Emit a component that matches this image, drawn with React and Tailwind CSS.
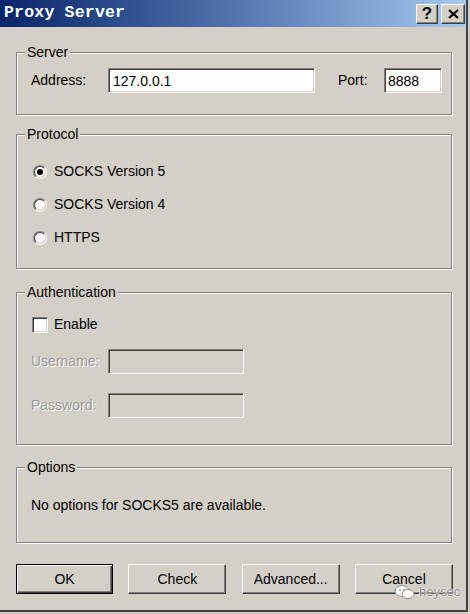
import { useState } from "react";

// classic win32 bevels
const sunken =
  "border border-t-[#808080] border-l-[#808080] border-r-white border-b-white shadow-[inset_1px_1px_0_#404040,inset_-1px_-1px_0_#d4d0c8]";
const raised =
  "border border-t-white border-l-white border-r-[#404040] border-b-[#404040] shadow-[inset_-1px_-1px_0_#808080]";
const etched =
  "relative border border-[#808080] shadow-[1px_1px_0_#fff,inset_1px_1px_0_#fff]";

const GroupBox = ({ title, className, children }) => (
  <div className={`${etched} ${className}`}>
    <span className="absolute -top-[9px] left-[8px] bg-[#d4d0c8] px-[2px] leading-[16px]">
      {title}
    </span>
    {children}
  </div>
);

const Radio = ({ checked, label, onClick }) => (
  <div className="flex items-center h-[33px] cursor-default" onClick={onClick}>
    <div className="ml-[16px] w-[14px] h-[14px] rounded-full border border-t-[#808080] border-l-[#808080] border-r-white border-b-white">
      <div className="w-full h-full rounded-full border border-t-[#404040] border-l-[#404040] border-r-[#d4d0c8] border-b-[#d4d0c8] bg-white flex items-center justify-center">
        {checked && <div className="w-[6px] h-[6px] rounded-full bg-black" />}
      </div>
    </div>
    <span className="ml-[7px]">{label}</span>
  </div>
);

const Button = ({ children, primary }) => (
  <button
    className={
      primary
        ? "w-[97px] h-[30px] border border-black bg-[#d4d0c8] shadow-[inset_1px_1px_0_#fff,inset_-1px_-1px_0_#404040,inset_-2px_-2px_0_#808080]"
        : `w-[98px] h-[30px] bg-[#d4d0c8] ${raised}`
    }
  >
    {children}
  </button>
);

const App = () => {
  const [protocol, setProtocol] = useState("socks5");
  const [auth, setAuth] = useState(false);

  return (
    <div className="w-[470px] h-[614px] bg-[#d4d0c8] text-[14px] text-black font-['Liberation_Sans',Arial,sans-serif] relative overflow-hidden">
      <div className="w-[468px] h-[612px] border-r-2 border-b-2 border-r-[#404040] border-b-[#404040]">
        {/* Title bar */}
        <div className="h-[27px] flex items-center bg-gradient-to-r from-[#0a246a] to-[#a6caf0]">
          <span className="pl-[4px] text-white font-bold text-[16.5px] font-['Liberation_Mono','Courier_New',monospace] tracking-[0.2px]">
            Proxy Server
          </span>
          <div className="ml-auto flex gap-[3px] pr-[1px]">
            <div className={`w-[22px] h-[20px] bg-[#d4d0c8] ${raised} flex items-center justify-center font-bold text-[17px] leading-none`}>
              ?
            </div>
            <div className={`w-[24px] h-[20px] bg-[#d4d0c8] ${raised} flex items-center justify-center`}>
              <svg width="11" height="10" viewBox="0 0 11 10">
                <path d="M1 1 L10 9 M10 1 L1 9" stroke="#000" strokeWidth="2.2" />
              </svg>
            </div>
          </div>
        </div>

        <div className="pl-[16px] flex flex-col w-[452px]">
          {/* Server */}
          <GroupBox title="Server" className="mt-[25px] h-[63px]">
            <div className="flex items-center mt-[15px] pl-[14px]">
              <span className="w-[77px]">Address:</span>
              <input
                defaultValue="127.0.0.1"
                className={`w-[207px] h-[25px] bg-white px-[4px] outline-none ${sunken}`}
              />
              <span className="ml-[23px] w-[46px]">Port:</span>
              <input
                defaultValue="8888"
                className={`w-[58px] h-[25px] bg-white px-[3px] outline-none ${sunken}`}
              />
            </div>
          </GroupBox>

          {/* Protocol */}
          <GroupBox title="Protocol" className="mt-[19px] h-[135px]">
            <div className="pt-[20px]">
              <Radio label="SOCKS Version 5" checked={protocol === "socks5"} onClick={() => setProtocol("socks5")} />
              <Radio label="SOCKS Version 4" checked={protocol === "socks4"} onClick={() => setProtocol("socks4")} />
              <Radio label="HTTPS" checked={protocol === "https"} onClick={() => setProtocol("https")} />
            </div>
          </GroupBox>

          {/* Authentication */}
          <GroupBox title="Authentication" className="mt-[23px] h-[153px]">
            <div className="flex items-center mt-[21px] pl-[15px]" onClick={() => setAuth(!auth)}>
              <div className={`w-[16px] h-[16px] bg-white ${sunken} flex items-center justify-center`}>
                {auth && (
                  <svg width="9" height="8" viewBox="0 0 9 8">
                    <path d="M1 4 L3.5 6.5 L8 1" stroke="#000" strokeWidth="2" fill="none" />
                  </svg>
                )}
              </div>
              <span className="ml-[6px]">Enable</span>
            </div>
            <div className="flex items-center mt-[14px] pl-[14px]">
              <span className={`w-[77px] ${auth ? "" : "text-[#9a9a9a] [text-shadow:1px_1px_0_#fff]"}`}>Username:</span>
              <input
                disabled={!auth}
                className={`w-[136px] h-[25px] px-[3px] outline-none ${auth ? "bg-white" : "bg-[#d4d0c8]"} ${sunken}`}
              />
            </div>
            <div className="flex items-center mt-[19px] pl-[14px]">
              <span className={`w-[77px] ${auth ? "" : "text-[#9a9a9a] [text-shadow:1px_1px_0_#fff]"}`}>Password:</span>
              <input
                type="password"
                disabled={!auth}
                className={`w-[136px] h-[25px] px-[3px] outline-none ${auth ? "bg-white" : "bg-[#d4d0c8]"} ${sunken}`}
              />
            </div>
          </GroupBox>

          {/* Options */}
          <GroupBox title="Options" className="mt-[22px] h-[76px]">
            <p className="mt-[29px] pl-[14px] leading-[16px]">
              No options for SOCKS5 are available.
            </p>
          </GroupBox>

          {/* Buttons */}
          <div className="mt-[21px] flex justify-between w-[437px]">
            <Button primary>OK</Button>
            <Button>Check</Button>
            <Button>Advanced...</Button>
            <Button>Cancel</Button>
          </div>
        </div>
      </div>

      {/* watermark */}
      <div className="absolute left-[394px] top-[582px] flex items-center gap-[3px] text-[13px] text-[#8a8a8a] [text-shadow:0_0_2px_#fff,0_0_1px_#fff]">
        <svg width="22" height="16" viewBox="0 0 22 16">
          <ellipse cx="8" cy="7" rx="7" ry="5.5" fill="#fff" stroke="#8a8a8a" strokeWidth="1" />
          <ellipse cx="14" cy="10" rx="6" ry="4.5" fill="#fff" stroke="#8a8a8a" strokeWidth="1" />
          <circle cx="6" cy="6" r="0.9" fill="#8a8a8a" />
          <circle cx="10" cy="6" r="0.9" fill="#8a8a8a" />
        </svg>
        <span>heysec</span>
      </div>
    </div>
  );
};

export default App;
